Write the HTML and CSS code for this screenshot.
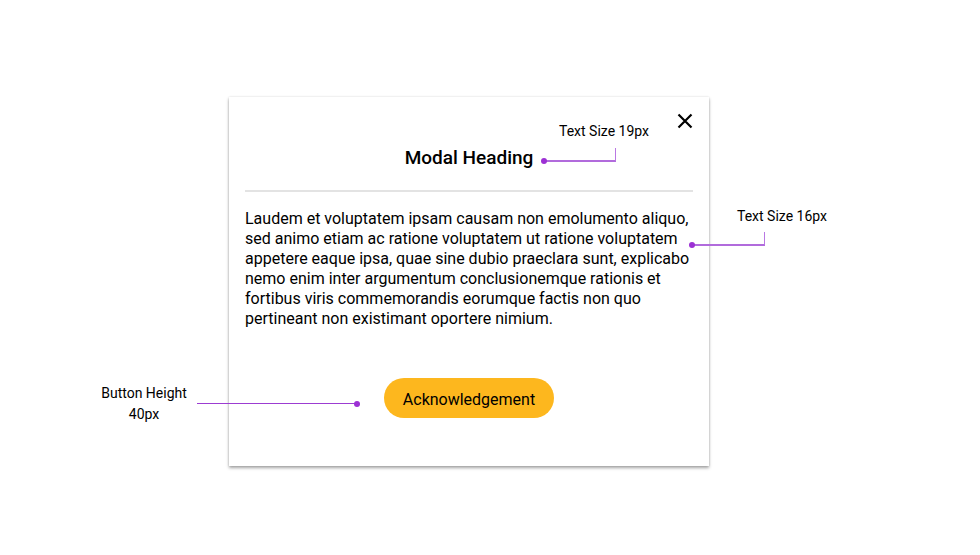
FILE: index.html
```html
<!DOCTYPE html>
<html>
<head>
<meta charset="utf-8">
<link rel="stylesheet" href="styles.css">
</head>
<body>
<div class="stage">
  <div class="modal">
    <button class="close" aria-label="Close">
      <svg width="16" height="16" viewBox="0 0 16 16"><path d="M1.5 1.5 L14.5 14.5 M14.5 1.5 L1.5 14.5" stroke="#000" stroke-width="2.2" fill="none"/></svg>
    </button>
    <h2 class="heading">Modal Heading</h2>
    <hr class="divider">
    <p class="body">Laudem et voluptatem ipsam causam non emolumento aliquo, sed animo etiam ac ratione voluptatem ut ratione voluptatem appetere eaque ipsa, quae sine dubio praeclara sunt, explicabo nemo enim inter argumentum conclusionemque rationis et fortibus viris commemorandis eorumque factis non quo pertineant non existimant oportere nimium.</p>
    <div class="actions">
      <button class="btn">Acknowledgement</button>
    </div>
  </div>

  <div class="note note-heading">Text Size 19px</div>
  <div class="leader leader-heading"><span class="dot"></span></div>

  <div class="note note-body">Text Size 16px</div>
  <div class="leader leader-body"><span class="dot"></span></div>

  <div class="note note-btn">Button Height<br>40px</div>
  <div class="leader-flat"><span class="dot dot-right"></span></div>
</div>
</body>
</html>
```
FILE: styles.css
```css
html, body {
  margin: 0;
  padding: 0;
  background: #fff;
}
body {
  font-family: Roboto, "Liberation Sans", sans-serif;
  color: #000;
}
.stage {
  position: relative;
  width: 980px;
  height: 555px;
  padding: 97px 0 0 229px;
  box-sizing: border-box;
}
.modal {
  position: relative;
  width: 480px;
  height: 369px;
  box-sizing: border-box;
  background: #fff;
  box-shadow: 0 2px 3px rgba(0,0,0,0.35), 0 0 2px rgba(0,0,0,0.12);
  display: flex;
  flex-direction: column;
}
.close {
  position: absolute;
  top: 16px;
  right: 16px;
  width: 16px;
  height: 16px;
  padding: 0;
  border: 0;
  background: none;
  display: block;
}
.close svg { display: block; }
.heading {
  margin: 50px 0 0;
  font-size: 19px;
  line-height: 22px;
  font-weight: 500;
  text-align: center;
}
.divider {
  margin: 21px 16px 0;
  border: 0;
  height: 2px;
  background: #e3e3e3;
}
.body {
  margin: 17px 16px 0;
  font-size: 16px;
  line-height: 20px;
}
.actions {
  margin-top: 49px;
  display: flex;
  justify-content: center;
}
.btn {
  height: 40px;
  width: 170px;
  padding: 2px 0 0;
  border: 0;
  border-radius: 20px;
  background: #fdb71e;
  font-family: Roboto, "Liberation Sans", sans-serif;
  font-size: 16px;
  color: #000;
}
.note {
  position: absolute;
  font-size: 14px;
  line-height: 21px;
  white-space: nowrap;
}
.note-heading { left: 559px; top: 121px; }
.note-body { left: 737px; top: 206px; }
.note-btn { left: 98px; top: 383px; text-align: center; width: 92px; }
.leader {
  position: absolute;
  border-right: 1px solid #b978e3;
  border-bottom: 2px solid #b16bdc;
  height: 12px;
}
.leader-heading { left: 544px; top: 148px; width: 71px; }
.leader-body { left: 692px; top: 232px; width: 72px; }
.leader-flat {
  position: absolute;
  left: 197px;
  top: 403px;
  width: 160px;
  height: 0;
  border-top: 1px solid #9c3cd2;
}
.dot {
  position: absolute;
  width: 6px;
  height: 6px;
  border-radius: 50%;
  background: #9c30d4;
  left: -3px;
  bottom: -4px;
}
.dot-right {
  left: auto;
  right: -3px;
  bottom: auto;
  top: -3.5px;
}
```
